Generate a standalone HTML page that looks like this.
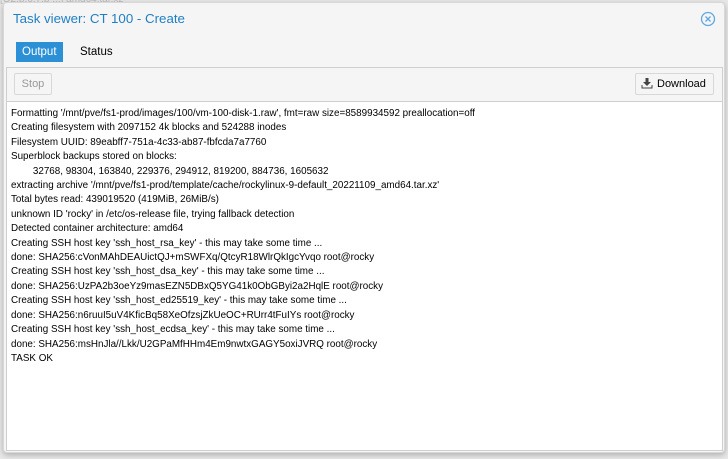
<!DOCTYPE html><html><head><style>
body{margin:0;width:728px;height:459px;background:#e8e8e8;font-family:"Liberation Sans",sans-serif;position:relative;overflow:hidden}
.bgt{position:absolute;left:0;top:-6px;font-size:10px;color:#bbb}
.win{position:absolute;left:3px;top:2px;width:722px;height:451px;background:#f5f5f5;border:1px solid #d8d8d8;border-radius:4px;box-shadow:0 2px 6px rgba(0,0,0,.25);box-sizing:border-box}
.title{position:absolute;left:9px;top:8px;font-size:13.3px;color:#1f7fc4}
.close{position:absolute;left:696px;top:8px}
.tab{position:absolute;top:39px;height:20px;line-height:20px;font-size:11.5px;padding:0 6px}
.panel{position:absolute;left:2px;top:64px;width:717px;height:384px;background:#fff;border:1px solid #cfcfcf;box-sizing:border-box}
.tb{height:33px;border-bottom:1px solid #cfcfcf;position:relative;background:#f5f5f5}
.btn{position:absolute;top:5px;height:22px;border:1px solid #d8d8d8;border-radius:2px;box-sizing:border-box;font-size:11px;line-height:20px;background:#f5f5f5}
pre{margin:0;padding:5px 4px;font-family:"Liberation Sans",sans-serif;font-size:9.85px;line-height:14.4px;color:#000}
</style></head><body>
<div class="bgt">[Q2.b.6.7.b ...] amd64.tar.xz'</div>
<div class="win">
<div class="title">Task viewer: CT 100 - Create</div>
<svg class="close" width="16" height="16" viewBox="0 0 16 16"><circle cx="8" cy="8" r="6.5" fill="none" stroke="#5fa8e0" stroke-width="1.3"/><path d="M5.5 5.5L10.5 10.5M10.5 5.5L5.5 10.5" stroke="#5fa8e0" stroke-width="1.3"/></svg>
<div class="tab" style="left:12px;background:#2b90d5;color:#fff">Output</div>
<div class="tab" style="left:70px;color:#000">Status</div>
<div class="panel">
<div class="tb">
<div class="btn" style="left:7px;width:38px;color:#999;text-align:center">Stop</div>
<div class="btn" style="left:628px;width:79px;color:#000;padding-left:21px">
<svg style="position:absolute;left:5px;top:4px" width="12" height="11" viewBox="0 0 12 11"><path d="M4.5 0h3v4h2.5L6 8 2 4h2.5z" fill="#444"/><path d="M0.5 7v3.5h11V7h-1v2.5h-9V7z" fill="#444"/></svg>Download</div>
</div>
<pre>Formatting '/mnt/pve/fs1-prod/images/100/vm-100-disk-1.raw', fmt=raw size=8589934592 preallocation=off
Creating filesystem with 2097152 4k blocks and 524288 inodes
Filesystem UUID: 89eabff7-751a-4c33-ab87-fbfcda7a7760
Superblock backups stored on blocks:
        32768, 98304, 163840, 229376, 294912, 819200, 884736, 1605632
extracting archive '/mnt/pve/fs1-prod/template/cache/rockylinux-9-default_20221109_amd64.tar.xz'
Total bytes read: 439019520 (419MiB, 26MiB/s)
unknown ID 'rocky' in /etc/os-release file, trying fallback detection
Detected container architecture: amd64
Creating SSH host key 'ssh_host_rsa_key' - this may take some time ...
done: SHA256:cVonMAhDEAUictQJ+mSWFXq/QtcyR18WlrQkIgcYvqo root@rocky
Creating SSH host key 'ssh_host_dsa_key' - this may take some time ...
done: SHA256:UzPA2b3oeYz9masEZN5DBxQ5YG41k0ObGByi2a2HqlE root@rocky
Creating SSH host key 'ssh_host_ed25519_key' - this may take some time ...
done: SHA256:n6ruuI5uV4KficBq58XeOfzsjZkUeOC+RUrr4tFuIYs root@rocky
Creating SSH host key 'ssh_host_ecdsa_key' - this may take some time ...
done: SHA256:msHnJla//Lkk/U2GPaMfHHm4Em9nwtxGAGY5oxiJVRQ root@rocky
TASK OK</pre>
</div></div>
</body></html>
